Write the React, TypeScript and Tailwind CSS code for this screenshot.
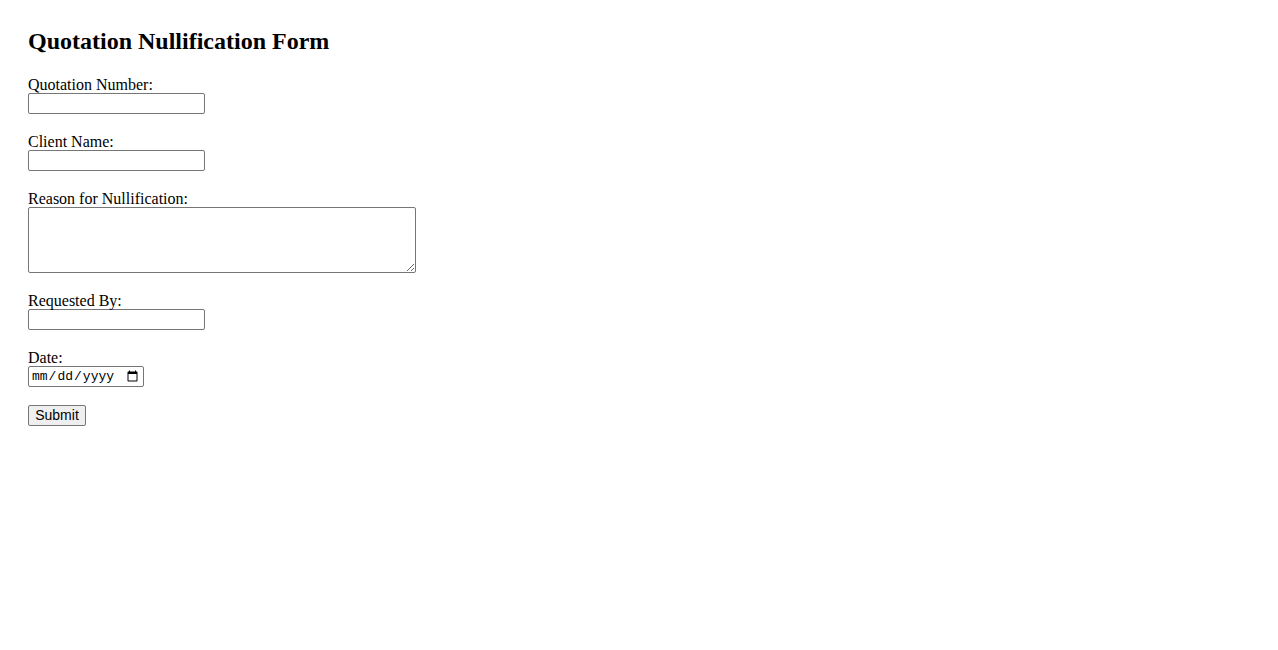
import React from "react";

const fieldClass =
  "block box-border w-[177px] h-[21px] border border-[#767676] rounded-[2px] bg-white px-[2px] py-[1px] text-[13.33px] leading-[17px] font-['Liberation_Sans',Arial,sans-serif] text-black outline-none";

function Field({ label, children }: { label: string; children: React.ReactNode }) {
  return (
    <div className="mb-[18px]">
      <label className="block h-[18px] text-[16px] leading-[20px]">{label}</label>
      {children}
    </div>
  );
}

export default function App() {
  return (
    <div className="min-h-[650px] bg-white pl-[28px] pt-[27px] font-['Liberation_Serif','Times_New_Roman',serif] text-black">
      <h2 className="h-[28px] text-[24px] leading-[28px] font-bold mb-[20px]">
        Quotation Nullification Form
      </h2>
      <form onSubmit={(e) => e.preventDefault()}>
        <Field label="Quotation Number:">
          <input type="text" className={fieldClass} />
        </Field>
        <Field label="Client Name:">
          <input type="text" className={fieldClass} />
        </Field>
        <Field label="Reason for Nullification:">
          <textarea className="block box-border w-[388px] h-[66px] border border-[#767676] rounded-[2px] bg-white px-[2px] py-[2px] text-[13.33px] font-['Liberation_Mono',monospace] outline-none resize" />
        </Field>
        <Field label="Requested By:">
          <input type="text" className={fieldClass} />
        </Field>
        <Field label="Date:">
          <input
            type="date"
            className="block box-border w-[116px] h-[21px] border border-[#767676] rounded-[2px] bg-white px-[2px] py-0 text-[13px] leading-[17px] font-['Liberation_Mono',monospace] text-black outline-none"
          />
        </Field>
        <button
          type="submit"
          className="block box-border w-[58px] h-[21px] border border-[#767676] rounded-[2px] bg-[#efefef] px-[6px] text-[14px] leading-[17px] font-['Liberation_Sans',Arial,sans-serif] text-black"
        >
          Submit
        </button>
      </form>
    </div>
  );
}
